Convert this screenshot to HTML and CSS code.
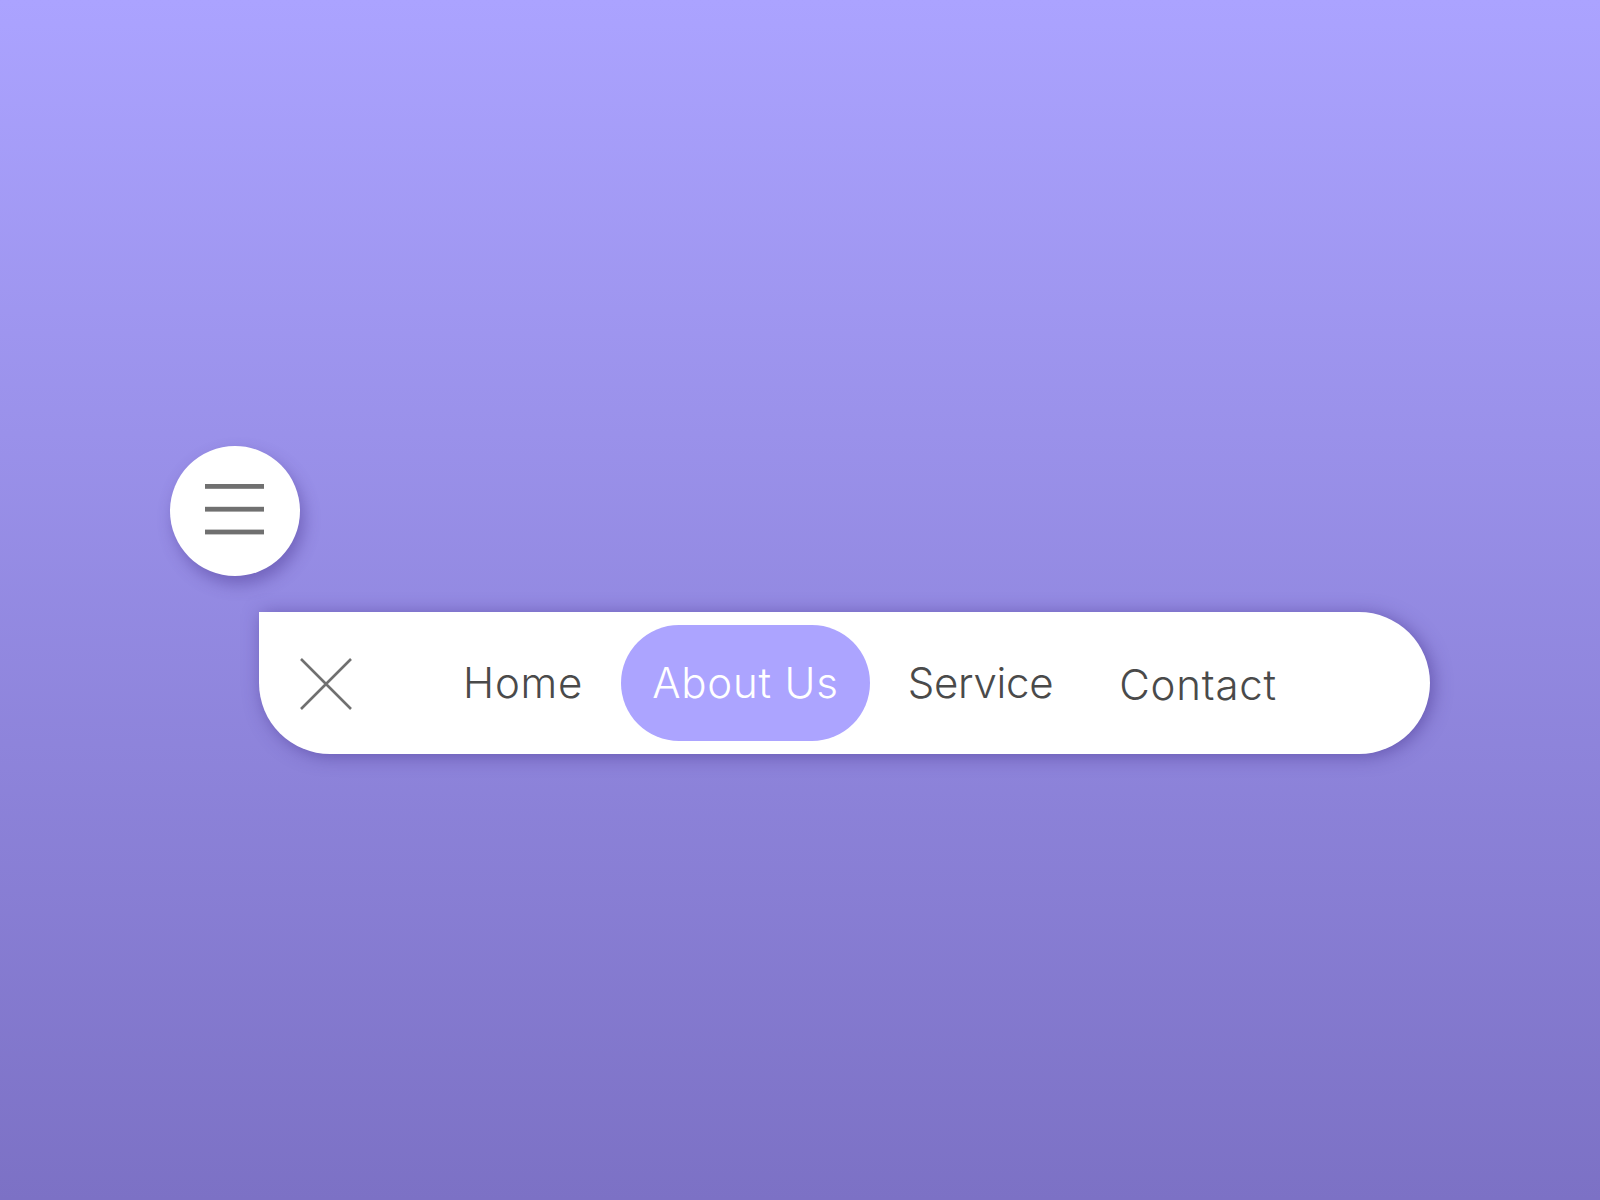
FILE: index.html
```html
<!DOCTYPE html>
<html>
<head>
<meta charset="utf-8">
<link rel="stylesheet" href="styles.css">
</head>
<body>
<div class="stage">
  <button class="burger" aria-label="Menu">
    <svg width="60" height="52" viewBox="0 0 60 52">
      <rect x="0" y="0" width="59" height="4.8" fill="#707070"/>
      <rect x="0" y="22.8" width="59" height="4.8" fill="#707070"/>
      <rect x="0" y="45.6" width="59" height="4.8" fill="#707070"/>
    </svg>
  </button>
  <nav class="navbar">
    <span class="close" aria-label="Close">
      <svg width="52" height="52" viewBox="0 0 52 52">
        <path d="M1 1 L51 51 M51 1 L1 51" stroke="#707070" stroke-width="2.6" fill="none"/>
      </svg>
    </span>
    <ul class="menu">
      <li class="item">Home</li>
      <li class="item active">About Us</li>
      <li class="item service">Service</li>
      <li class="item contact">Contact</li>
    </ul>
  </nav>
</div>
</body>
</html>
```

FILE: styles.css
```css
html, body {
  margin: 0;
  padding: 0;
}
body {
  width: 1600px;
  height: 1200px;
  background: linear-gradient(to bottom, #aba3ff 0%, #7c71c5 100%);
  font-family: "Inter", "Lato", sans-serif;
  overflow: hidden;
}
.stage {
  padding-top: 446px;
  padding-left: 170px;
  display: flex;
  flex-direction: column;
  align-items: flex-start;
}
.burger {
  width: 130px;
  height: 130px;
  border-radius: 50%;
  border: none;
  background: #fff;
  box-shadow: 4px 8px 16px rgba(70, 50, 140, 0.45);
  display: flex;
  align-items: center;
  justify-content: center;
  padding: 0;
}
.burger svg {
  display: block;
  margin-top: -2px;
}
.navbar {
  margin-top: 36px;
  margin-left: 89px;
  width: 1171px;
  height: 142px;
  background: #fff;
  border-radius: 0 71px 71px 71px;
  box-shadow: 3px 2px 18px rgba(60, 40, 130, 0.5);
  display: flex;
  align-items: center;
  box-sizing: border-box;
  padding-left: 41px;
}
.close {
  display: flex;
  width: 52px;
  height: 52px;
  margin-top: 1px;
}
.close svg { display: block; }
.menu {
  list-style: none;
  margin: 0;
  padding: 0;
  margin-left: 80px;
  display: flex;
  gap: 7px;
  align-items: center;
}
.item {
  height: 116px;
  display: flex;
  align-items: center;
  padding: 0 31px;
  font-size: 42px;
  font-weight: 350;
  color: #4a4a4a;
  border-radius: 58px;
  letter-spacing: 0.8px;
  padding-bottom: 1px;
  box-sizing: border-box;
}
.item.active {
  background: #aca4ff;
  color: #fff;
}
.item.service {
  letter-spacing: -0.3px;
}
.item.contact {
  margin-left: -3px;
  padding-bottom: 0;
  padding-top: 3px;
}
```
